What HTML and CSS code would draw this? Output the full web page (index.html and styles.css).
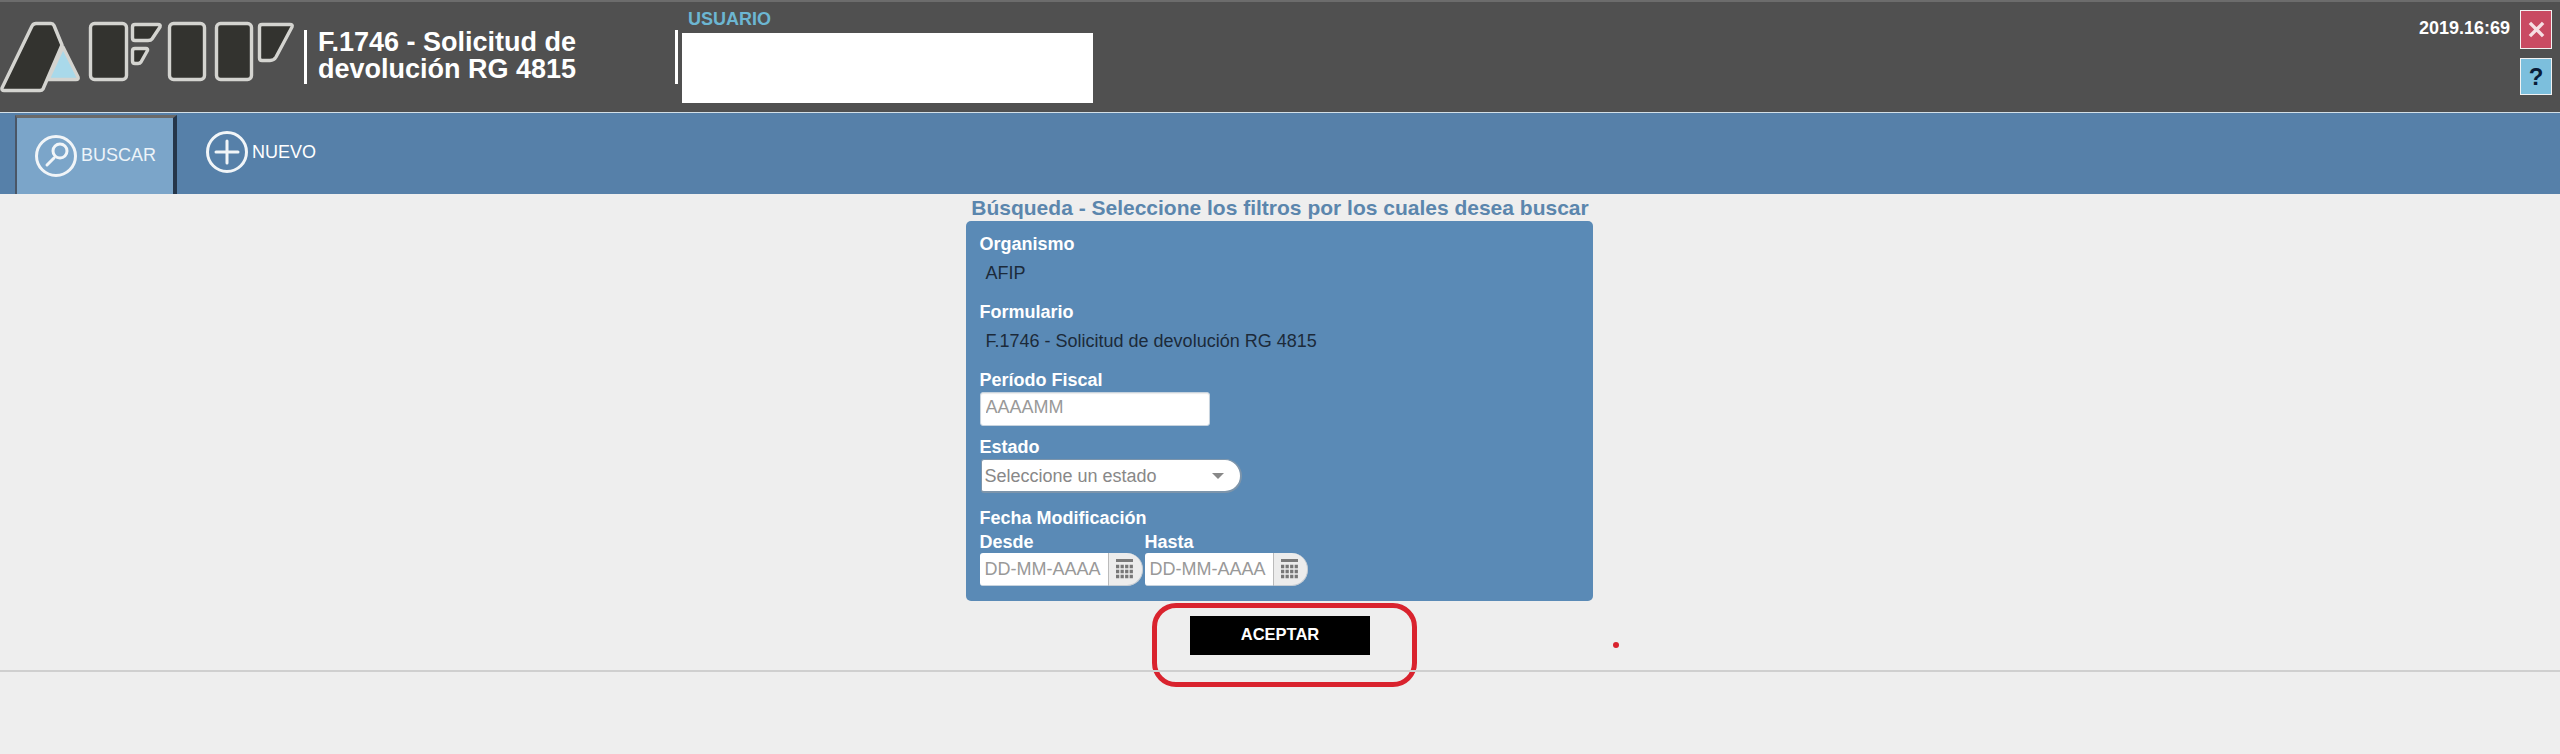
FILE: index.html
```html
<!DOCTYPE html>
<html lang="es">
<head>
<meta charset="utf-8">
<title>F.1746 - Solicitud de devolución RG 4815</title>
<link rel="stylesheet" href="styles.css">
</head>
<body>
<header class="header">
  <svg class="logo" viewBox="0 0 300 110" aria-label="AFIP">
    <g class="logo-light"><path d="M63 45 L78 75 Q79 77.5 76 77.5 L48 77.5 Z"/></g>
    <g class="logo-dark">
      <path d="M36 21.5 H51 Q53 21.5 54 23.5 L62 43 L43 87 Q42 88.5 40 88.5 H4 Q1.5 88.5 2 86 L32 24 Q33.5 21.5 36 21.5 Z"/>
      <rect x="90.5" y="21.5" width="36" height="56" rx="4"/>
      <path d="M135 22.5 H158 Q161 22.5 160 25 L152 37 Q151 38.5 148 38.5 H135 Q132.5 38.5 132.5 36 V25 Q132.5 22.5 135 22.5 Z"/>
      <path d="M135 46.5 H146 Q148 46.5 147.5 48.5 L141 60 Q140 61.5 138 61.5 H135 Q132.5 61.5 132.5 59 V49 Q132.5 46.5 135 46.5 Z"/>
      <rect x="169.5" y="21.5" width="35" height="56" rx="4"/>
      <rect x="216.5" y="21.5" width="35" height="56" rx="4"/>
      <path d="M262 22.5 H290 Q293 22.5 292 25 L276 55 Q274 58.5 270 58.5 H262 Q259.5 58.5 259.5 56 V25 Q259.5 22.5 262 22.5 Z"/>
    </g>
  </svg>
  <span class="sep"></span>
  <h1 class="title">F.1746 - Solicitud de<br>devolución RG 4815</h1>
  <span class="sep sep-user"></span>
  <div class="user">
    <div class="user-label">USUARIO</div>
    <div class="user-box"></div>
  </div>
  <div class="clock">2019.16:69</div>
  <div class="actions">
    <button class="act act-close" aria-label="Cerrar">
      <svg viewBox="0 0 18 18"><path d="M2 2 L16 16 M16 2 L2 16"/></svg>
    </button>
    <button class="act act-help">?</button>
  </div>
</header>

<nav class="nav">
  <a class="nav-item nav-active">
    <svg class="nav-icon" viewBox="0 0 42 42">
      <circle cx="21" cy="21" r="19.5"/>
      <circle cx="25" cy="16" r="7"/>
      <path d="M19 23 L12 30"/>
    </svg>
    <span>BUSCAR</span>
  </a>
  <a class="nav-item nav-new">
    <svg class="nav-icon" viewBox="0 0 42 42">
      <circle cx="21" cy="21" r="19.5"/>
      <path d="M10 21 H32 M21 10 V32"/>
    </svg>
    <span>NUEVO</span>
  </a>
</nav>

<main class="main">
  <h2 class="heading">Búsqueda - Seleccione los filtros por los cuales desea buscar</h2>
  <form class="panel">
    <label class="lbl">Organismo</label>
    <div class="value">AFIP</div>
    <label class="lbl lbl-next">Formulario</label>
    <div class="value">F.1746 - Solicitud de devolución RG 4815</div>
    <label class="lbl lbl-next">Período Fiscal</label>
    <input class="input" placeholder="AAAAMM">
    <label class="lbl lbl-tight">Estado</label>
    <div class="select">
      <span>Seleccione un estado</span>
      <i class="caret"></i>
    </div>
    <label class="lbl lbl-next">Fecha Modificación</label>
    <div class="dates">
      <div class="date-col">
        <label class="lbl">Desde</label>
        <div class="date">
          <input class="date-input" placeholder="DD-MM-AAAA">
          <span class="date-btn">
            <svg class="cal" viewBox="0 0 17 20">
              <rect class="cal-top" x="0" y="0" width="17" height="3"/>
              <path class="cal-grid" d="M0 7.5 H17 M0 12.5 H17 M0 17.5 H17"/>
            </svg>
          </span>
        </div>
      </div>
      <div class="date-col">
        <label class="lbl">Hasta</label>
        <div class="date">
          <input class="date-input" placeholder="DD-MM-AAAA">
          <span class="date-btn">
            <svg class="cal" viewBox="0 0 17 20">
              <rect class="cal-top" x="0" y="0" width="17" height="3"/>
              <path class="cal-grid" d="M0 7.5 H17 M0 12.5 H17 M0 17.5 H17"/>
            </svg>
          </span>
        </div>
      </div>
    </div>
  </form>
  <button class="accept" type="button">ACEPTAR</button>
  <span class="mark-box"></span>
  <span class="mark-dot"></span>
</main>
<hr class="rule">
</body>
</html>
```
FILE: styles.css
```css
* { box-sizing: border-box; }
html, body { margin: 0; padding: 0; }
body {
  background: #eeeeee;
  font-family: "Liberation Sans", Arial, sans-serif;
  font-size: 18px;
  height: 754px;
  overflow: hidden;
}
.header {
  display: flex;
  height: 113px;
  background: #505050;
  border-top: 2px solid #6c6c6c;
  border-bottom: 1px solid #d3e0e8;
  color: #fff;
}
.logo { width: 300px; height: 110px; flex: none; }
.logo-dark path, .logo-dark rect {
  fill: #33332f;
  stroke: #d4d4d0;
  stroke-width: 3.4;
  stroke-linejoin: round;
}
.logo-light path {
  fill: #a9d9ea;
  stroke: #d4d4d0;
  stroke-width: 3.4;
  stroke-linejoin: round;
}
.sep {
  flex: none;
  width: 3px;
  height: 54px;
  margin: 28px 0 0 4px;
  background: #fff;
}
.sep-user { margin-left: 0; }
.title {
  flex: none;
  width: 368px;
  margin: 0;
  padding: 27px 0 0 11px;
  font-size: 27px;
  line-height: 27px;
  font-weight: 700;
}
.user { flex: none; width: 411px; margin-left: 4px; }
.user-label {
  height: 25px;
  margin-top: 6px;
  padding-left: 6px;
  font-size: 18px;
  line-height: 23px;
  font-weight: 700;
  color: #6cb6d2;
}
.user-box { height: 70px; background: #fff; }
.clock {
  margin: 16px 10px 0 auto;
  font-size: 18px;
  line-height: 20px;
  font-weight: 700;
}
.actions {
  display: flex;
  flex-direction: column;
  gap: 9px;
  width: 32px;
  margin: 8px 8px 0 0;
}
.act {
  display: flex;
  align-items: center;
  justify-content: center;
  width: 32px;
  padding: 0;
  border: 1px solid #f2f2f2;
  font-family: inherit;
}
.act-close { height: 39px; background: #c94a62; }
.act-close svg { width: 17px; height: 17px; }
.act-close path { fill: none; stroke: #f6dfe3; stroke-width: 3.6; }
.act-help {
  height: 37px;
  background: #7cbfdd;
  color: #0a1c38;
  font-size: 24px;
  font-weight: 700;
}
.nav {
  display: flex;
  height: 81px;
  padding-left: 15px;
  background: #5680a9;
  color: #fff;
}
.nav-item { display: flex; align-items: center; gap: 4px; }
.nav-active {
  width: 162px;
  height: 79px;
  margin-top: 2px;
  padding-left: 18px;
  background: #7ba5c9;
  border-top: 3px solid #6a6a6a;
  border-left: 2px solid #4a5666;
  border-right: 4px solid #25364a;
}
.nav-active span { color: #edf4f9; margin-top: -2px; }
.nav-new { height: 78px; margin-left: 29px; }
.nav-icon { width: 42px; height: 42px; flex: none; }
.nav-icon circle, .nav-icon path {
  fill: none;
  stroke: #f1f5f8;
  stroke-width: 3;
}
.nav-icon path { stroke-linecap: round; }
.main {
  position: relative;
  display: flex;
  flex-direction: column;
  align-items: center;
  height: 477px;
}
.heading {
  margin: 0;
  height: 27px;
  font-size: 21px;
  line-height: 27px;
  font-weight: 700;
  color: #5b86ad;
  white-space: nowrap;
}
.panel {
  display: block;
  width: 627px;
  height: 380px;
  margin-right: 2px;
  padding: 13px 14px 15px;
  background: #5a8ab6;
  border-radius: 5px;
}
.lbl {
  display: block;
  line-height: 20px;
  font-weight: 700;
  color: #fff;
}
.lbl-next { margin-top: 15px; }
.lbl-tight { margin-top: 11px; }
.value {
  height: 28px;
  margin-top: 5px;
  padding-left: 6px;
  line-height: 28px;
  color: #1c2a3a;
}
.input {
  display: block;
  width: 230px;
  height: 34px;
  margin-top: 2px;
  padding: 0 5px 3px;
  border: 1px solid #c7d3de;
  border-radius: 3px;
  background: #fff;
  font: 18px "Liberation Sans", Arial, sans-serif;
  box-shadow: inset 0 1px 1px rgba(0,0,0,.08);
}
.input::placeholder, .date-input::placeholder { color: #999; opacity: 1; }
.select {
  display: flex;
  align-items: center;
  justify-content: space-between;
  width: 261px;
  height: 34px;
  margin: 2px 0 0 1px;
  padding: 1px 16px 0 3px;
  background: #fff;
  border: 2px solid #7d95ab;
  border-top-width: 1px;
  border-left-width: 1px;
  border-radius: 3px 17px 17px 3px;
  color: #888;
}
.caret {
  width: 0;
  height: 0;
  border-left: 6px solid transparent;
  border-right: 6px solid transparent;
  border-top: 6px solid #888;
}
.dates { display: flex; gap: 2px; margin-top: 4px; }
.date-col { width: 163px; }
.date { display: flex; height: 33px; margin-top: 1px; }
.date-input {
  width: 128px;
  height: 33px;
  padding: 0 5px;
  border: 0;
  border-bottom: 1px solid #c7d3de;
  border-radius: 3px 0 0 3px;
  background: #fff;
  font: 18px "Liberation Sans", Arial, sans-serif;
}
.date-btn {
  display: flex;
  align-items: center;
  justify-content: flex-start;
  width: 35px;
  height: 33px;
  padding-left: 7px;
  background: #ececec;
  border-left: 1px solid #bbb;
  border-right: 1px solid #c5ccd3;
  border-bottom: 1px solid #c5ccd3;
  border-radius: 0 16px 16px 0;
}
.cal { width: 17px; height: 20px; }
.cal-top { fill: #7a7a7a; }
.cal-grid { fill: none; stroke: #777; stroke-width: 3.4; stroke-dasharray: 3.25 1.3; }
.accept {
  width: 180px;
  height: 39px;
  margin-top: 15px;
  padding: 0 0 3px;
  border: 0;
  background: #000;
  color: #fff;
  font: 700 16.5px "Liberation Sans", Arial, sans-serif;
}
.mark-box {
  position: absolute;
  left: 1152px;
  top: 409px;
  width: 265px;
  height: 84px;
  border: 5px solid #d9232e;
  border-radius: 24px;
  pointer-events: none;
}
.mark-dot {
  position: absolute;
  left: 1613px;
  top: 448px;
  width: 6px;
  height: 6px;
  border-radius: 50%;
  background: #d9232e;
}
.rule {
  position: absolute;
  left: 0;
  right: 0;
  top: 670px;
  margin: 0;
  height: 2px;
  border: 0;
  background: #cfcfcf;
}
```
